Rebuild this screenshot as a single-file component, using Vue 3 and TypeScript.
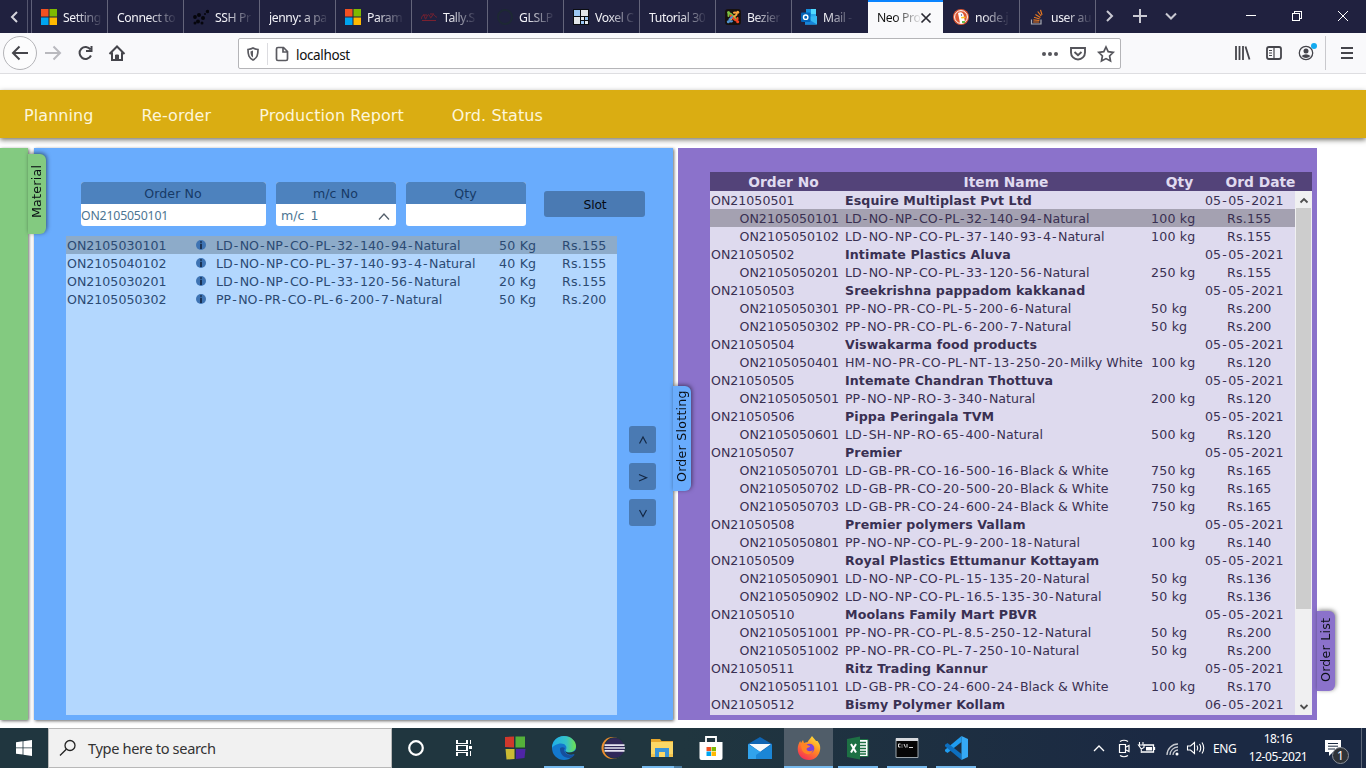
<script setup lang="ts">
interface BrowserTab {
  title: string
  icon?: string
  active?: boolean
}
interface SlotRow {
  no: string
  item: string
  qty: string
  rate: string
}
interface OrderRow {
  no: string
  name: string
  qty?: string
  last: string
}

const tabs: BrowserTab[] = [
  { title: 'Setting', icon: 'ms' },
  { title: 'Connect to' },
  { title: 'SSH Pr', icon: 'ssh' },
  { title: 'jenny: a pa' },
  { title: 'Param', icon: 'ms' },
  { title: 'Tally.S', icon: 'tally' },
  { title: 'GLSLP', icon: 'git' },
  { title: 'Voxel C', icon: 'voxel' },
  { title: 'Tutorial 30' },
  { title: 'Bezier', icon: 'joomla' },
  { title: 'Mail -', icon: 'outlook' },
  { title: 'Neo Pro', active: true },
  { title: 'node.j', icon: 'duck' },
  { title: 'user au', icon: 'stack' },
]

const menu = ['Planning', 'Re-order', 'Production Report', 'Ord. Status']

const slots: SlotRow[] = [
  { no: 'ON2105030101', item: 'LD-NO-NP-CO-PL-32-140-94-Natural', qty: '50 Kg', rate: 'Rs.155' },
  { no: 'ON2105040102', item: 'LD-NO-NP-CO-PL-37-140-93-4-Natural', qty: '40 Kg', rate: 'Rs.155' },
  { no: 'ON2105030201', item: 'LD-NO-NP-CO-PL-33-120-56-Natural', qty: '20 Kg', rate: 'Rs.155' },
  { no: 'ON2105050302', item: 'PP-NO-PR-CO-PL-6-200-7-Natural', qty: '50 Kg', rate: 'Rs.200' },
]

const orders: OrderRow[] = [
  { no: 'ON21050501', name: 'Esquire Multiplast Pvt Ltd', last: '05-05-2021' },
  { no: 'ON2105050101', name: 'LD-NO-NP-CO-PL-32-140-94-Natural', qty: '100 kg', last: 'Rs.155' },
  { no: 'ON2105050102', name: 'LD-NO-NP-CO-PL-37-140-93-4-Natural', qty: '100 kg', last: 'Rs.155' },
  { no: 'ON21050502', name: 'Intimate Plastics Aluva', last: '05-05-2021' },
  { no: 'ON2105050201', name: 'LD-NO-NP-CO-PL-33-120-56-Natural', qty: '250 kg', last: 'Rs.155' },
  { no: 'ON21050503', name: 'Sreekrishna pappadom kakkanad', last: '05-05-2021' },
  { no: 'ON2105050301', name: 'PP-NO-PR-CO-PL-5-200-6-Natural', qty: '50 kg', last: 'Rs.200' },
  { no: 'ON2105050302', name: 'PP-NO-PR-CO-PL-6-200-7-Natural', qty: '50 kg', last: 'Rs.200' },
  { no: 'ON21050504', name: 'Viswakarma food products', last: '05-05-2021' },
  { no: 'ON2105050401', name: 'HM-NO-PR-CO-PL-NT-13-250-20-Milky White', qty: '100 kg', last: 'Rs.120' },
  { no: 'ON21050505', name: 'Intemate Chandran Thottuva', last: '05-05-2021' },
  { no: 'ON2105050501', name: 'PP-NO-NP-RO-3-340-Natural', qty: '200 kg', last: 'Rs.120' },
  { no: 'ON21050506', name: 'Pippa Peringala TVM', last: '05-05-2021' },
  { no: 'ON2105050601', name: 'LD-SH-NP-RO-65-400-Natural', qty: '500 kg', last: 'Rs.120' },
  { no: 'ON21050507', name: 'Premier', last: '05-05-2021' },
  { no: 'ON2105050701', name: 'LD-GB-PR-CO-16-500-16-Black & White', qty: '750 kg', last: 'Rs.165' },
  { no: 'ON2105050702', name: 'LD-GB-PR-CO-20-500-20-Black & White', qty: '750 kg', last: 'Rs.165' },
  { no: 'ON2105050703', name: 'LD-GB-PR-CO-24-600-24-Black & White', qty: '750 kg', last: 'Rs.165' },
  { no: 'ON21050508', name: 'Premier polymers Vallam', last: '05-05-2021' },
  { no: 'ON2105050801', name: 'PP-NO-NP-CO-PL-9-200-18-Natural', qty: '100 kg', last: 'Rs.140' },
  { no: 'ON21050509', name: 'Royal Plastics Ettumanur Kottayam', last: '05-05-2021' },
  { no: 'ON2105050901', name: 'LD-NO-NP-CO-PL-15-135-20-Natural', qty: '50 kg', last: 'Rs.136' },
  { no: 'ON2105050902', name: 'LD-NO-NP-CO-PL-16.5-135-30-Natural', qty: '50 kg', last: 'Rs.136' },
  { no: 'ON21050510', name: 'Moolans Family Mart PBVR', last: '05-05-2021' },
  { no: 'ON2105051001', name: 'PP-NO-PR-CO-PL-8.5-250-12-Natural', qty: '50 kg', last: 'Rs.200' },
  { no: 'ON2105051002', name: 'PP-NO-PR-CO-PL-7-250-10-Natural', qty: '50 kg', last: 'Rs.200' },
  { no: 'ON21050511', name: 'Ritz Trading Kannur', last: '05-05-2021' },
  { no: 'ON2105051101', name: 'LD-GB-PR-CO-24-600-24-Black & White', qty: '100 kg', last: 'Rs.170' },
  { no: 'ON21050512', name: 'Bismy Polymer Kollam', last: '06-05-2021' },
]

// Splits a code so hyphens can carry wider spacing than the other characters.
const parts = (s: string): string[] => s.split(/(-)/).filter(Boolean)
</script>

<template>
  <div class="screen">
    <!-- browser tab strip -->
    <div class="tabstrip">
      <div class="scroll-left">
        <svg width="10" height="14" viewBox="0 0 10 14"><path d="M8 2 3 7l5 5" fill="none" stroke="#d5d5dd" stroke-width="2" /></svg>
      </div>
      <div v-for="t in tabs" :key="t.title" class="tab" :class="{ active: t.active }">
        <svg v-if="t.icon" class="fav" width="16" height="16" viewBox="0 0 16 16">
          <g v-if="t.icon === 'ms'">
            <path d="M0 0h7.5v7.5H0z" fill="#f25022" /><path d="M8.5 0H16v7.5H8.500z" fill="#7fba00" />
            <path d="M0 8.500h7.500V16H0z" fill="#00a4ef" /><path d="M8.500 8.500H16V16H8.500z" fill="#ffb900" />
          </g>
          <g v-else-if="t.icon === 'ssh'" fill="#05050c">
            <circle cx="2" cy="8" r="1.900" /><circle cx="5" cy="12.500" r="2" /><circle cx="6" cy="6" r="2" />
            <circle cx="10" cy="9" r="2" /><circle cx="9" cy="14" r="1.500" /><circle cx="14.500" cy="2.500" r="1.700" /><circle cx="2" cy="14" r="1.500" /><circle cx="12" cy="5" r="1" />
          </g>
          <g v-else-if="t.icon === 'tally'" fill="none" stroke="#7a2130" stroke-width="1">
            <path d="M0 10c2-5 3-5 4-1s2-5 4-3 1 5 3 1 3 2 5 1M1 11.500h14M2 6h4M9 5h4" />
          </g>
          <g v-else-if="t.icon === 'git'">
            <circle cx="8" cy="8" r="7" fill="none" stroke="#1d2834" stroke-width="2" />
          </g>
          <g v-else-if="t.icon === 'voxel'">
            <path d="M0 0h16v16H0z" fill="#0b0d12" /><path d="M1 1h6v6H1z" fill="#9cc7f3" />
            <path d="M8 1h7v6H8zM1 8h6v7H1z" fill="#e3e6ea" />
            <path d="M8 8h3v3H8zM12 12h3v3h-3z" fill="#e3e6ea" /><path d="M12 8h3v3h-3zM8 12h3v3H8z" fill="#9cc7f3" />
          </g>
          <g v-else-if="t.icon === 'joomla'">
            <rect width="16" height="16" rx="3" fill="#17110e" />
            <g fill="none" stroke-width="2" stroke-linecap="round">
              <path d="M3.500 7c-.5-2 1-3 2.500-2l5 5" stroke="#7ac143" /><path d="M9 3.700c2-.7 3 .5 2.500 2L5 11" stroke="#f9a541" />
              <path d="M12.500 9c.5 2-1 3-2.500 2L5.500 6.500" stroke="#f44321" /><path d="M7 12.300c-2 .7-3-.5-2.500-2L7 8" stroke="#5091cd" />
            </g>
            <circle cx="3.500" cy="3.500" r="1.500" fill="#7ac143" /><circle cx="12.700" cy="3.300" r="1.500" fill="#f9a541" /><circle cx="12.700" cy="12.700" r="1.500" fill="#f44321" /><circle cx="3.300" cy="12.700" r="1.500" fill="#5091cd" />
          </g>
          <g v-else-if="t.icon === 'outlook'">
            <path d="M5 0h10v11H5z" fill="#1490df" /><path d="M10 0h5v5h-5z" fill="#50d9ff" /><path d="M10 5h5v5h-5z" fill="#28a8ea" />
            <path d="m4 8 12-1v8.500H4z" fill="#35b8f1" /><path d="m4 8 12 7.500H4z" fill="#1784d9" />
            <rect y="3.500" width="9.500" height="9.500" rx="1" fill="#0364b8" /><circle cx="4.700" cy="8.200" r="2.200" fill="none" stroke="#fff" stroke-width="1.400" />
          </g>
          <g v-else-if="t.icon === 'duck'">
            <circle cx="8" cy="8" r="8" fill="#de5833" /><circle cx="8" cy="8" r="6.400" fill="none" stroke="#fff" stroke-width="1" />
            <path d="M5 4c3-2 6 0 6 4l1 5c-2 2-4 1.500-5 1z" fill="#fff" /><path d="m8 8 4.500-.5V9l-4 .6z" fill="#fdc21e" /><path d="M9 12h3v2H9z" fill="#65bc46" /><circle cx="8.500" cy="6" r=".7" fill="#2d4f8e" />
          </g>
          <g v-else-if="t.icon === 'stack'" fill="none">
            <path d="M2.500 10.500v4.500h9.500v-4.500" stroke="#a9abb3" stroke-width="1.200" />
            <path d="M4.200 13h6M4.400 10.800l6 .7M5 8.300l5.700 1.700M6.400 5.500l5 3M8.700 2.500l3.500 4.500M11.500.8l1.500 5" stroke="#e87922" stroke-width="1.200" />
          </g>
        </svg>
        <span class="title">{{ t.title }}</span>
        <svg v-if="t.active" class="close" width="12" height="12" viewBox="0 0 12 12"><path d="m1.500 1.500 9 9m0-9-9 9" stroke="#2a2a33" stroke-width="1.700" /></svg>
      </div>
      <div class="strip-end">
        <svg width="270" height="33" viewBox="0 0 270 33" fill="none" stroke="#c9c9d2" stroke-width="2">
          <path d="m11 11 5 5-5 5M37 16h14M44 9v14M70 13.500l5 5 5-5" />
          <g stroke="#fff" stroke-width="1" shape-rendering="crispEdges"><path d="M150 15.500h10M196.500 13.500h7v7h-7zM198.500 13v-2h7v7h-2" /></g>
          <path d="m242 11 10 10m0-10-10 10" stroke="#fff" stroke-width="1" />
        </svg>
      </div>
    </div>

    <!-- browser toolbar -->
    <div class="toolbar">
      <svg class="nav-icons" width="238" height="40" viewBox="0 0 238 40" fill="none" stroke="#45454b" stroke-width="2">
        <circle cx="20" cy="20" r="16.500" fill="#fcfcfd" stroke="#b4b4b8" stroke-width="1" />
        <path d="M28 20H13m6.500-6.500L13 20l6.500 6.500" />
        <path d="M45 20h15m-6.500-6.500L60 20l-6.500 6.500" stroke="#b9b9be" />
        <path d="M90.500 16.500a6 6 0 1 0 .5 6M91.500 13v5h-5.500" />
        <path d="m109.500 21 7.500-7.500 7.500 7.500M112 19.500V27h10v-7.500" />
        <path d="M115.500 22h3v5h-3z" fill="#45454b" stroke-width="1" />
      </svg>
      <div class="urlbar">
        <svg width="50" height="28" viewBox="0 0 50 28" fill="none" stroke="#5a5a60">
          <path d="M9 9.500c2-.2 3.500-.5 5-1.500 1.500 1 3 1.300 5 1.500 0 5.500-.8 8.300-5 10.500-4.200-2.200-5-5-5-10.500z" stroke-width="1.700" /><path d="M14 10.500v7c-2-1.300-2.500-3-2.500-6z" fill="#5a5a60" stroke="none" />
          <path d="M28.500 3v22" stroke="#dcdce0" />
          <path d="M39 7.500h5.500l4 4v7.500q0 1.500-1.500 1.500h-8q-1.500 0-1.500-1.500V9q0-1.500 1.500-1.500zM44 7.500v4.500h4.500" stroke-width="1.700" />
        </svg>
        <span class="url">localhost</span>
        <svg class="url-actions" width="80" height="28" viewBox="0 0 80 28" fill="none" stroke="#55555b" stroke-width="1.900">
          <g fill="#55555b" stroke="none"><circle cx="4" cy="14" r="2" /><circle cx="10" cy="14" r="2" /><circle cx="16" cy="14" r="2" /></g>
          <path d="M31 8h14v4.500a7 7 0 0 1-14 0zM34.500 12l3.500 3.300 3.500-3.300" />
          <path d="m66 7 2.200 4.700 5 .7-3.600 3.600.9 5-4.500-2.400-4.500 2.400.9-5-3.600-3.600 5-.7z" stroke-width="1.700" />
        </svg>
      </div>
      <svg class="tool-icons" width="140" height="40" viewBox="0 0 140 40" fill="none" stroke="#45454b" stroke-width="2">
        <path d="M10 13v14M13.500 13v14M17 13v14M19.500 13.500l4 13" stroke-width="1.800" />
        <rect x="41" y="14" width="14" height="12" rx="2" stroke-width="1.800" /><path d="M48 14v12M43 17.500h3M43 20h3M43 22.500h3" stroke-width="1.200" />
        <circle cx="80" cy="20" r="6.700" stroke-width="1.300" /><circle cx="80" cy="18" r="2.500" fill="#45454b" stroke="none" /><path d="M75.500 23q4.500-3.500 9 0-4.500 4-9 0z" fill="#45454b" stroke="none" />
        <circle cx="88" cy="13" r="3" fill="#12aaf0" stroke="none" />
        <path d="M99.500 3v34" stroke="#c9c9cd" stroke-width="1" />
        <path d="M115 15h12M115 20h12M115 25h12" stroke-width="1.800" />
      </svg>
    </div>

    <!-- page -->
    <main class="page">
      <nav class="menu">
        <a v-for="m in menu" :key="m">{{ m }}</a>
      </nav>
      <div class="workspace">
        <section class="panel green"><span class="side-tab material">Material</span></section>
        <section class="panel blue">
          <span class="side-tab slotting">Order Slotting</span>
          <div class="form">
            <div class="field wide"><label>Order No</label><div class="value order">ON2105050101</div></div>
            <div class="field">
              <label>m/c No</label>
              <div class="value select">m/c 1
                <svg width="12" height="8" viewBox="0 0 12 8"><path d="m1 7.500 5-5.500L11 7.500" fill="none" stroke="#55606c" stroke-width="1.300" /></svg>
              </div>
            </div>
            <div class="field"><label>Qty</label><div class="value"></div></div>
            <button class="slot">Slot</button>
          </div>
          <div class="slot-body">
            <div class="slot-list">
              <div v-for="(s, i) in slots" :key="s.no" class="slot-row" :class="{ selected: i === 0 }">
                <span>{{ s.no }}</span>
                <svg width="10" height="10" viewBox="0 0 10 10"><circle cx="5" cy="5" r="5" fill="#3e73b3" /><path d="M4.200 3.700h1.600V9H4.200zM4.200 1.300h1.600v1.500H4.200z" fill="#12233f" /></svg>
                <span><span v-for="(p, k) in parts(s.item)" :key="k" :class="{ hy: p === '-' }">{{ p }}</span></span>
                <span>{{ s.qty }}</span>
                <span>{{ s.rate }}</span>
              </div>
            </div>
            <div class="movers">
              <button v-for="(d, i) in ['M3.500 9.500 7 3l3.500 6.500', 'M3 3.500 10.500 6.700 3 10', 'M3.500 3 7 9.500 10.500 3']" :key="i">
                <svg width="14" height="12" viewBox="0 0 14 12"><path :d="d" fill="none" stroke="#142844" stroke-width="1.200" /></svg>
              </button>
            </div>
          </div>
        </section>
        <section class="panel purple">
          <span class="side-tab list">Order List</span>
          <div class="order-head">
            <span>Order No</span><span>Item Name</span><span>Qty</span><span>Ord Date</span>
          </div>
          <div class="order-body">
            <div class="order-rows">
              <div v-for="(o, i) in orders" :key="o.no" class="order-row" :class="{ group: !o.qty, selected: i === 1 }">
                <span class="no">{{ o.no }}</span>
                <span class="name"><span v-for="(p, k) in parts(o.name)" :key="k" :class="{ hy: p === '-' }">{{ p }}</span></span>
                <span class="qty">{{ o.qty }}</span>
                <span class="last"><span v-for="(p, k) in parts(o.last)" :key="k" :class="{ hy: p === '-' }">{{ p }}</span></span>
              </div>
            </div>
            <div class="scrollbar">
              <svg width="16" height="17" viewBox="0 0 16 17"><path d="m4.500 11.500 3.500-3.500 3.500 3.500" fill="none" stroke="#4f4f4f" stroke-width="1.800" /></svg>
              <div class="thumb"></div>
              <svg class="down" width="16" height="17" viewBox="0 0 16 17"><path d="m4.500 7 3.500 3.500L11.500 7" fill="none" stroke="#4f4f4f" stroke-width="1.800" /></svg>
            </div>
          </div>
        </section>
      </div>
    </main>

    <!-- desktop taskbar -->
    <div class="taskbar">
      <div class="start">
        <svg width="16" height="16" viewBox="0 0 16 16" fill="#fff"><path d="M0 2.300 6.600 1.300v6.200H0zM7.400 1.200 16 0v7.500H7.400zM0 8.300h6.600v6.300L0 13.700zM7.400 8.300H16V16l-8.600-1.200z" /></svg>
      </div>
      <div class="search">
        <svg width="18" height="18" viewBox="0 0 18 18" fill="none" stroke="#222" stroke-width="1.300"><circle cx="11" cy="6.500" r="5" /><path d="M7.300 10.200 1 16.500" /></svg>
        <span>Type here to search</span>
      </div>
      <div class="app"><svg width="24" height="24" viewBox="1 0 24 24"><circle cx="12" cy="12" r="6.800" fill="none" stroke="#fff" stroke-width="2.200" /></svg></div>
      <div class="app"><svg width="24" height="24" viewBox="0 0 24 24" fill="none" stroke="#fff" stroke-width="1.200" shape-rendering="crispEdges"><path d="M3 4v3.500h10V4M3 20v-3.500h10V20M3 9.500h10v5H3zM16.500 4v4M16.500 15v5" /><path d="M15 9.500h3v3h-3z" fill="#fff" stroke="none" /></svg></div>
      <div class="app"><svg width="24" height="24" viewBox="0 0 24 24"><path d="m2 1 9-.5v11L2 11z" fill="#d0382c" /><path d="M12.500.5H22v11h-9.500z" fill="#55b03a" /><path d="M2.500 13h9v10l-8 .5z" fill="#cbbb33" /><path d="M13 13h9.500l-1 9-8.500 1z" fill="#4f25a6" /></svg></div>
      <div class="app open">
        <svg width="24" height="24" viewBox="0 0 24 24">
          <defs><linearGradient id="edgeA" x1="0" x2="1"><stop offset="0" stop-color="#1faee8" /><stop offset=".6" stop-color="#36c3c6" /><stop offset="1" stop-color="#6fe04d" /></linearGradient></defs>
          <circle cx="12" cy="12" r="12" fill="#1378cd" /><path d="M0 12C0 5 5 0 12 0c7 0 12 5 12 10 0 4-3 6.500-7 6.500-3 0-4-1.500-3-3 1.500-3-1-6-5-6-4 0-8 2.500-9 4.500z" fill="url(#edgeA)" />
          <path d="M8 13c0 5 4 9 9 9 2 0 4-1 6-3.500-2 1-7 1.500-9.500-1.500-2-2.200-1.500-3.500-.5-5-3-1.500-5-.5-5 1z" fill="#164f9d" /><path d="M24 17.500 22.800 18c-4 1.500-9 .5-9.500-3 1 1.500 2.500 1.500 4 1.500 3 0 5-.8 6.700-3z" fill="#20363f" />
        </svg>
      </div>
      <div class="app"><svg width="24" height="24" viewBox="0 0 24 24"><circle cx="11.500" cy="12" r="11" fill="#ee8d2f" /><circle cx="13.300" cy="12" r="10.700" fill="#20363f" /><circle cx="13.500" cy="12" r="10" fill="#31285a" /><path d="M3.500 8.300h20v1.600h-20zM3.500 11.200h20.500v1.600H3.500zM3.500 14.100h20v1.600h-20z" fill="#e8e5f2" /></svg></div>
      <div class="app open stacked"><svg width="24" height="24" viewBox="0 0 24 24"><path d="M1 3h9l1.500 2H23v16H1z" fill="#e8a82c" /><path d="M1 6h22v15H1z" fill="#fbd766" /><path d="M5 12h14v9h-4v-5H9v5H5z" fill="#3a93d8" /><path d="M1 18h4v3H1zM19 18h4v3h-4z" fill="#f2c34d" /></svg></div>
      <div class="app"><svg width="24" height="24" viewBox="0 0 24 24"><path d="M7 6V1h10v5" fill="none" stroke="#fff" stroke-width="1.800" /><path d="M.5 6h23v16q0 2-2 2h-19q-2 0-2-2z" fill="#fff" /><path d="M7.500 11H12v4H7.500z" fill="#f25022" /><path d="M12.500 11H17v4h-4.500z" fill="#7fba00" /><path d="M7.500 15.500H12V20H7.500z" fill="#00a4ef" /><path d="M12.500 15.500H17V20h-4.500z" fill="#ffb900" /></svg></div>
      <div class="app"><svg width="24" height="24" viewBox="0 0 24 24"><path d="M12 1 24 8v15H0V8z" fill="#0e64b3" /><path d="M1 8h22l-11 8z" fill="#f5f9fc" /><path d="m0 8 14 9-6 6H0z" fill="#31a3ec" /><path d="M24 8 8 19v4h16z" fill="#1b86d6" /></svg></div>
      <div class="app current">
        <svg width="24" height="24" viewBox="0 0 24 24">
          <defs><linearGradient id="fox" x1=".8" y1="0" x2=".2" y2="1"><stop offset="0" stop-color="#ffe53b" /><stop offset=".45" stop-color="#ff8c22" /><stop offset="1" stop-color="#f5265b" /></linearGradient></defs>
          <path d="M15 0c1 2 3 3 4 5l1.500 0c2 2.500 3 5 2.700 8C22.500 19.500 18 24 12 24 5.500 24 .7 19.500.7 13c0-3 1-6 2.500-8l.8 2L6 4l1 3c1-.5 2-1 3.500-.7C11.500 4 13 3 15 0z" fill="url(#fox)" />
          <circle cx="12.500" cy="12.500" r="4.800" fill="#7c42d8" /><path d="M4 8c3-1.500 5-.5 6 1l3 1c0 1.500-3 1.500-3.500 3 .5 2.500 4 3 6.500 1-1 4-4.500 5-7.500 3.500C5 16 4 12 4 8z" fill="#ff8324" />
        </svg>
      </div>
      <div class="app open"><svg width="24" height="24" viewBox="0 0 24 24"><path d="M12 3.500h10v17H12z" fill="#fff" stroke="#1d7044" /><path d="M14 6.500h6M14 9.500h6M14 12.500h6M14 15.500h6M14 18h6" stroke="#1d7044" stroke-width="1.500" /><path d="M1 3 14 .5v23L1 21z" fill="#1d7044" /><path d="m5 8 5 8.500M10 8l-5 8.500" stroke="#fff" stroke-width="2" /></svg></div>
      <div class="app open"><svg width="24" height="24" viewBox="0 0 24 24"><path d="M1 2.500h22v19H1z" fill="#060606" stroke="#9ba5ab" /><path d="M1 2h22v3H1z" fill="#d7dade" /><path d="M5.500 8H3.500v3h2M7 8.500v1M7 10.500v1M9 8l1.500 3.500M12 8v3.500M14 11.500h4" stroke="#ddd" fill="none" /></svg></div>
      <div class="app open"><svg width="24" height="24" viewBox="0 0 24 24"><path d="M17.500 0v6L3.500 17 1 15.300v-1.500z" fill="#1f9cf0" /><path d="M17.500 24v-6L3.500 7 1 8.700v1.500z" fill="#0d6fc0" /><path d="M17.500 0 24 3v18l-6.500 3z" fill="#35a9f5" /></svg></div>
      <div class="tray">
        <svg width="116" height="24" viewBox="0 0 116 24" fill="none" stroke="#fff" stroke-width="1.300">
          <path d="m1 15 5-5 5 5" />
          <path d="M26.500 8.500h6v8h-6zM33 11l3-1.500v6L33 14M27 5.500q4-2.500 8 0M27 19.500q4 2.500 8 0" stroke-width="1.200" />
          <path d="M51 9h9.500v7H49M61.500 11v3" /><path d="M46.500 6v3M50 6v3M45.500 9h5.500v2.500l-2.700 1.500zM48.300 13v4" stroke-width="1.100" /><path d="M53 11h6v3.500h-6z" fill="#fff" stroke="none" />
          <path d="M74 19A11 11 0 0 1 85 8M77 19a8 8 0 0 1 8-8M80 19a5 5 0 0 1 5-5" opacity=".75" /><circle cx="84" cy="18" r="1.500" fill="#fff" stroke="none" />
          <path d="M94.500 10h3l4-3.500v11l-4-3.500h-3zM104 9.500q1.500 2.500 0 5M106.500 8q2.500 4 0 8M109 6.500q3.500 5.500 0 11" stroke-width="1.100" />
        </svg>
        <span class="lang">ENG</span>
        <div class="clock"><span>18:16</span><span>12-05-2021</span></div>
        <div class="notice">
          <svg width="17" height="17" viewBox="0 0 17 17"><path d="M0 0h16v12H8l-4 4v-4H0z" fill="#fff" /><path d="M3 3.500h10M3 6.200h10M3 9h7" stroke="#1c2c42" /></svg>
          <span class="count">1</span>
        </div>
        <i class="peek"></i>
      </div>
    </div>
  </div>
</template>

<style>
body {
  margin: 0;
  overflow: hidden;
}
</style>

<style scoped>
.screen {
  width: 1366px;
  height: 768px;
  display: flex;
  flex-direction: column;
  background: #fff;
  overflow: hidden;
  font-family: 'DejaVu Sans', Verdana, sans-serif;
}
.tabstrip {
  height: 33px;
  display: flex;
  background: #20213f;
  font: 12.2px 'Noto Sans', sans-serif;
  color: #f3f3f8;
}
.scroll-left {
  width: 32px;
  display: flex;
  align-items: center;
  justify-content: center;
  box-sizing: border-box;
  border-right: 1px solid #5f6079;
  padding-right: 4px;
  background: linear-gradient(90deg, transparent 27px, #55566f 27px, #55566f 28px, transparent 28px);
}
.tab {
  width: 76px;
  height: 33px;
  box-sizing: border-box;
  border-right: 1px solid #63647a;
  padding: 0 0 0 9px;
  display: flex;
  align-items: center;
  flex: none;
}
.tab:nth-child(12) {
  border-right-color: transparent;
}
.fav {
  flex: none;
  margin-right: 6px;
}
.title {
  white-space: nowrap;
  letter-spacing: -0.4px;
  margin-top: 2px;
  mask-image: linear-gradient(90deg, #000 calc(100% - 26px), rgba(0, 0, 0, 0.08) 100%);
}
.tab.active {
  width: 75px;
  margin-right: 1px;
  background: #f9f9fb;
  color: #111;
  border-top: 2px solid #0a84ff;
  border-right: 0;
  padding-right: 11px;
}
.tab.active .title {
  margin-top: 0;
}
.close {
  flex: none;
  margin-left: auto;
}
.strip-end {
  flex: 1;
  overflow: hidden;
}
.toolbar {
  height: 41px;
  box-sizing: border-box;
  border-bottom: 1px solid #dedee1;
  background: #f9f9fb;
  display: flex;
  align-items: flex-start;
  flex: none;
}
.urlbar {
  width: 883px;
  height: 31px;
  margin-top: 5px;
  box-sizing: border-box;
  border: 1px solid #b5b5b8;
  border-radius: 2px;
  background: #fff;
  display: flex;
  align-items: center;
}
.url {
  font: 13.5px 'Noto Sans', sans-serif;
  letter-spacing: -0.35px;
  color: #111;
  margin: 2px 0 0 7px;
}
.url-actions {
  margin-left: auto;
}
.tool-icons {
  margin-left: 105px;
}
.page {
  flex: 1;
  display: flex;
  flex-direction: column;
  padding-top: 16px;
}
.menu {
  height: 48px;
  box-sizing: border-box;
  background: #daad12;
  box-shadow: 0 2px 5px rgba(60, 60, 50, 0.7);
  display: flex;
  align-items: center;
  gap: 48px;
  padding: 2px 0 0 24px;
  color: #fdf6da;
  font-size: 16px;
  letter-spacing: 0.08px;
}
.workspace {
  display: flex;
  margin-top: 10px;
  height: 572px;
}
.panel {
  position: relative;
  box-sizing: border-box;
  box-shadow: 1px 1px 3px rgba(0, 0, 0, 0.6);
}
.green {
  width: 28px;
  background: #83ca80;
  margin-right: 6px;
  z-index: 3;
}
.blue {
  width: 639px;
  background: #69acfd;
  margin-right: 5px;
  padding: 34px 17px 5px 32px;
  z-index: 2;
  display: flex;
  flex-direction: column;
}
.purple {
  width: 639px;
  background: #8b72cb;
  padding: 24px 5px 5px 32px;
  box-shadow: none;
}
.side-tab {
  position: absolute;
  left: 100%;
  width: 18px;
  box-sizing: border-box;
  writing-mode: vertical-rl;
  transform: rotate(180deg);
  display: flex;
  align-items: center;
  justify-content: center;
  border-radius: 6px 0 0 6px;
  box-shadow: -1px 1px 4px rgba(0, 0, 0, 0.5);
  background: inherit;
  font-size: 12.6px;
  letter-spacing: 0.25px;
  padding-left: 1px;
  color: #0a0f14;
  white-space: nowrap;
}
.material {
  top: 6px;
  height: 80px;
  padding-top: 5px;
}
.slotting {
  top: 238px;
  height: 105px;
  padding-top: 4px;
}
.list {
  top: 463px;
  height: 80px;
  padding-top: 3px;
}
.form {
  display: flex;
  gap: 10px;
  padding-left: 15px;
}
.field {
  width: 120px;
  height: 44px;
  border-radius: 3px;
  overflow: hidden;
  background: #fff;
  color: #4c7592;
  font-size: 12.6px;
}
.field.wide {
  width: 185px;
}
.field label {
  display: block;
  height: 22px;
  box-sizing: border-box;
  padding-right: 1px;
  line-height: 24px;
  text-align: center;
  background: #4d82be;
  color: #173a66;
  letter-spacing: 0.1px;
}
.value {
  height: 22px;
  line-height: 24px;
  padding-left: 5px;
}
.value.order {
  font: 12.3px/24px 'Noto Sans', sans-serif;
  letter-spacing: -0.18px;
  padding-left: 0;
}
.value.select {
  display: flex;
  align-items: center;
  justify-content: space-between;
  padding-right: 6px;
  padding-top: 1px;
  word-spacing: 2px;
}
.slot {
  width: 101px;
  height: 26px;
  margin: 9px 0 0 8px;
  padding: 1px 0 0 1px;
  border: 0;
  border-radius: 3px;
  background: #4a7ab3;
  font: 12.3px 'DejaVu Sans', sans-serif;
  letter-spacing: -0.2px;
  color: #050a12;
}
.slot-body {
  display: flex;
  justify-content: space-between;
  margin-top: 10px;
  flex: 1;
}
.slot-list {
  width: 551px;
  background: #b3d7fe;
  color: #2b4a73;
  font-size: 12.6px;
}
.slot-row {
  height: 18px;
  line-height: 20px;
  display: grid;
  grid-template-columns: 129px 20px 283px 63px 1fr;
  align-items: center;
  padding-left: 1px;
  white-space: nowrap;
}
.slot-row > span {
  height: 18px;
}
.slot-row.selected {
  background: #8dabc9;
}
.slot-row > span:nth-last-child(-n + 2) {
  letter-spacing: 0.2px;
}
.hy {
  margin-left: 0.95px;
  letter-spacing: 1.450px;
}
.movers {
  display: flex;
  flex-direction: column;
  gap: 9.500px;
  padding-top: 190px;
}
.movers button {
  width: 27px;
  height: 27px;
  border: 0;
  border-radius: 3px;
  padding: 1px 0 0;
  background: #4a7ab3;
  display: flex;
  align-items: center;
  justify-content: center;
}
.order-head {
  height: 19px;
  line-height: 20px;
  background: #534379;
  color: #e0dbf0;
  font-size: 13.8px;
  font-weight: bold;
  display: grid;
  grid-template-columns: 147px 298px 49px 1fr;
  text-align: center;
}
.order-head span:last-child {
  padding-left: 5px;
}
.order-body {
  height: 524px;
  display: flex;
  background: #dedaee;
  color: #393052;
  font-size: 12.6px;
}
.order-rows {
  flex: 1;
}
.order-row {
  height: 18px;
  line-height: 20px;
  display: grid;
  grid-template-columns: 128px 306px 52px 93px;
  padding-left: 1px;
  white-space: nowrap;
}
.order-row.selected {
  background: #a4a1b1;
}
.no {
  text-align: right;
}
.group .no {
  text-align: left;
}
.name {
  padding-left: 6px;
}
.group .name {
  font-weight: bold;
  letter-spacing: 0.1px;
}
.qty {
  padding-left: 6px;
  letter-spacing: 0.2px;
}
.last {
  text-align: left;
  padding-left: 30px;
  letter-spacing: 0.2px;
}
.group .last {
  padding-left: 8px;
  letter-spacing: 0;
}
.group .last .hy {
  margin-left: 1.200px;
  letter-spacing: 1.400px;
}
.scrollbar {
  width: 17px;
  background: #f0f0f1;
  display: flex;
  flex-direction: column;
  align-items: center;
}
.thumb {
  width: 15px;
  height: 401px;
  background: #cdcdcd;
}
.down {
  margin-top: auto;
}
.taskbar {
  height: 40px;
  flex: none;
  display: flex;
  background: linear-gradient(90deg, #20363f 0%, #20363f 50%, #1b2943 85%, #1b2943 100%);
  font-family: 'Noto Sans', sans-serif;
}
.start {
  width: 48px;
  display: flex;
  align-items: center;
  justify-content: center;
}
.search {
  width: 344px;
  box-sizing: border-box;
  border: 1px solid #b8b8b8;
  background: #f1f1f1;
  display: flex;
  align-items: center;
  gap: 11px;
  padding-left: 10px;
  font-size: 14.6px;
  letter-spacing: -0.35px;
  color: #333;
}
.app {
  width: 49px;
  height: 40px;
  box-sizing: border-box;
  display: flex;
  align-items: center;
  justify-content: center;
}
.open {
  background: linear-gradient(#76b9ed, #76b9ed) center bottom / 40px 2px no-repeat;
}
.stacked {
  background-image: linear-gradient(90deg, #76b9ed 32px, #4a7ba0 32px);
}
.current {
  background: #505d69;
  border-bottom: 2px solid #76b9ed;
  padding-top: 2px;
}
.tray {
  flex: 1;
  display: flex;
  align-items: center;
  color: #fff;
  font-size: 12px;
  padding-left: 113px;
}
.lang {
  width: 25px;
  margin-left: 4px;
  letter-spacing: -0.4px;
}
.clock {
  width: 60px;
  margin-left: 10px;
  display: flex;
  flex-direction: column;
  align-items: center;
  line-height: 18px;
  letter-spacing: -0.4px;
}
.notice {
  position: relative;
  margin-left: 17px;
  height: 17px;
}
.count {
  position: absolute;
  left: 7px;
  top: 7px;
  width: 15px;
  height: 15px;
  border: 1px solid #8a8f98;
  border-radius: 50%;
  background: #2f3338;
  text-align: center;
  line-height: 15px;
  font-size: 12px;
}
.peek {
  width: 1px;
  height: 40px;
  margin: 0 4px 0 auto;
  background: #5d6778;
}
</style>
